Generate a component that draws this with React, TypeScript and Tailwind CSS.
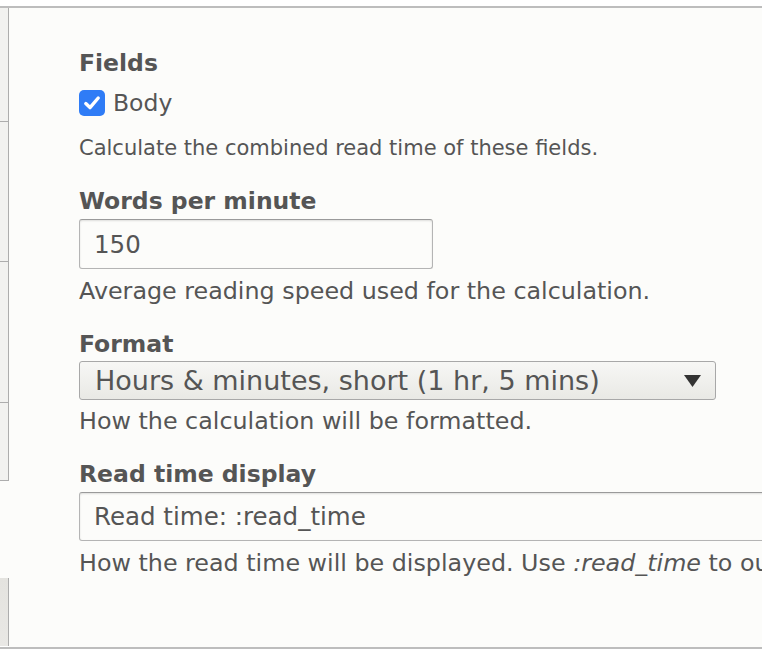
import React from 'react';

const FONT = '"DejaVu Sans", "Liberation Sans", sans-serif';

const Label = ({ children }: { children: React.ReactNode }) => (
  <div className="h-[30px] leading-[30px] text-[23.5px] font-bold text-[#555] whitespace-nowrap">{children}</div>
);

const Description = ({ children, className = '' }: { children: React.ReactNode; className?: string }) => (
  <div className={`h-[28px] leading-[28px] text-[#555] whitespace-nowrap ${className}`}>{children}</div>
);

const LeftStrip = () => (
  <div className="flex w-[9px] shrink-0 flex-col">
    <div className="h-[114px] border-b border-r border-[#adadad] bg-[#f2f2f0]" />
    <div className="h-[140px] border-b border-r border-[#adadad] bg-[#f2f2f0]" />
    <div className="h-[141px] border-b border-r border-[#adadad] bg-[#f2f2f0]" />
    <div className="h-[78px] border-b border-r border-[#adadad] bg-[#f2f2f0]" />
    <div className="h-[97px] bg-[#fcfcfa]" />
    <div className="h-[68px] border-r border-[#adadad] bg-gradient-to-b from-[#e4e3df] to-[#e9e8e5]" />
  </div>
);

export default function App() {
  return (
    <div className="h-[656px] w-[762px] overflow-hidden bg-white pt-[6px]" style={{ fontFamily: FONT }}>
      <div className="flex border-y-2 border-[#bdbdbd]">
        <LeftStrip />
        <div className="min-w-0 flex-1 overflow-hidden bg-[#fcfcfa] pl-[70px]">
          <div className="mt-[40px]">
            <Label>Fields</Label>
          </div>

          <div className="mt-[12px] flex h-[26px] items-center gap-[8px]">
            <span className="flex h-[26px] w-[26px] items-center justify-center rounded-[5px] bg-[#2f7cf6]">
              <svg width="20" height="20" viewBox="0 0 20 20" fill="none">
                <path d="M3.8 10.6 L8 14.6 L16.2 5" stroke="#fff" strokeWidth="3.4" strokeLinecap="round" strokeLinejoin="round" />
              </svg>
            </span>
            <span className="text-[23.5px] leading-[26px] text-[#555]">Body</span>
          </div>

          <Description className="mt-[18px] text-[21px]">Calculate the combined read time of these fields.</Description>

          <div className="mt-[24px]">
            <Label>Words per minute</Label>
          </div>
          <input
            readOnly
            defaultValue="150"
            className="mt-[3px] block h-[50px] w-[354px] rounded-[3px] border border-[#b4b4b4] border-t-[#9a9a9a] bg-[#fcfcfa] px-[14px] text-[24.5px] text-[#555] shadow-[inset_0_1px_2px_rgba(0,0,0,0.12)] outline-none"
            style={{ fontFamily: FONT }}
          />
          <Description className="mt-[8px] text-[23.8px]">Average reading speed used for the calculation.</Description>

          <div className="mt-[24px]">
            <Label>Format</Label>
          </div>
          <div className="mt-[2px] flex h-[39px] w-[637px] items-center justify-between rounded-[3px] border border-[#a8a8a8] bg-gradient-to-b from-[#f7f7f5] to-[#e9e9e5] pl-[15px] pr-[14px]">
            <span className="text-[27px] leading-[37px] text-[#555] whitespace-nowrap">Hours &amp; minutes, short (1 hr, 5 mins)</span>
            <svg width="17" height="12" viewBox="0 0 17 12">
              <path d="M0 0 H17 L8.5 12 Z" fill="#333" />
            </svg>
          </div>
          <Description className="mt-[7px] text-[23.8px]">How the calculation will be formatted.</Description>

          <div className="mt-[24px]">
            <Label>Read time display</Label>
          </div>
          <input
            readOnly
            defaultValue="Read time: :read_time"
            className="mt-[3px] block h-[49px] w-[760px] rounded-[3px] border border-[#b4b4b4] border-t-[#9a9a9a] bg-[#fcfcfa] px-[14px] text-[24.5px] text-[#555] shadow-[inset_0_1px_2px_rgba(0,0,0,0.12)] outline-none"
            style={{ fontFamily: FONT }}
          />
          <Description className="mt-[8px] text-[23.8px]">
            How the read time will be displayed. Use <em>:read_time</em> to output the read time.
          </Description>
          <div className="h-[70px]" />
        </div>
      </div>
    </div>
  );
}
